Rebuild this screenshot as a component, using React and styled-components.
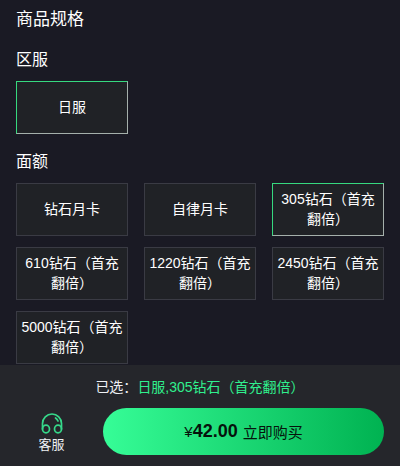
import React from 'react';
import styled, { createGlobalStyle } from 'styled-components';

const GlobalStyle = createGlobalStyle`
  html, body {
    margin: 0;
    padding: 0;
    background: #1a1a24;
    font-family: "Liberation Sans", Arial, "Noto Sans CJK SC", sans-serif;
  }
  * { box-sizing: border-box; }
`;

const Page = styled.div`
  width: 400px;
  height: 466px;
  display: flex;
  flex-direction: column;
  overflow: hidden;
  background: #1a1a24;
`;

const Content = styled.div`
  flex: 1;
  min-height: 0;
  padding: 10px 16px 0;
`;

const Title = styled.h2`
  margin: 0 0 20px;
  height: 20px;
  font-size: 17px;
  line-height: 20px;
  font-weight: 400;
  color: #fff;
`;

const GroupTitle = styled.h3`
  margin: 0 0 11px;
  height: 20px;
  font-size: 16px;
  line-height: 20px;
  font-weight: 400;
  color: #fff;
`;

const Grid = styled.div`
  display: grid;
  grid-template-columns: repeat(3, 112px);
  grid-auto-rows: 53px;
  column-gap: 16px;
  row-gap: 11px;
  margin-bottom: 18px;
`;

const Option = styled.div`
  display: flex;
  align-items: center;
  justify-content: center;
  padding: 0 4px 2px;
  text-align: center;
  font-size: 14px;
  line-height: 20px;
  color: #fff;
  background: #202226;
  border: 1px solid ${({ $active }) => ($active ? '#36d97f' : '#3a3b44')};
  border-right-color: ${({ $active }) => ($active ? '#a5b0ab' : '#3a3b44')};
  border-bottom-color: ${({ $active }) => ($active ? '#a5b0ab' : '#3a3b44')};
`;

const Footer = styled.div`
  height: 101px;
  flex-shrink: 0;
  background: #25262b;
  padding: 12px 16px 0;
`;

const Selected = styled.div`
  height: 20px;
  text-align: center;
  font-size: 14px;
  line-height: 20px;
  color: #eef0f4;
`;

const Accent = styled.span`
  color: #30f08e;
`;

const Actions = styled.div`
  display: flex;
  align-items: center;
  margin-top: 11px;
`;

const Service = styled.div`
  width: 71px;
  margin-right: 16px;
  padding-top: 1px;
  display: flex;
  flex-direction: column;
  align-items: center;
  gap: 2px;
  font-size: 13px;
  line-height: 16px;
  color: #eef0f4;
`;

const BuyButton = styled.button`
  width: 281px;
  height: 47px;
  border: 0;
  padding: 0;
  border-radius: 24px;
  background: linear-gradient(90deg, #36fd97 0%, #00b251 100%);
  color: #06130c;
  font-family: inherit;
  font-size: 15px;
  display: flex;
  align-items: center;
  justify-content: center;
`;

const Price = styled.span`
  font-size: 18px;
  font-weight: 700;
  margin-right: 5px;
`;

const Yen = styled.span`
  font-size: 15px;
  font-weight: 400;
`;

const Headset = () => (
  <svg width="24" height="24" viewBox="0 0 24 24" fill="none" stroke="#36d98a" strokeWidth="1.7" strokeLinecap="round">
    <path d="M2.5 18 V12.5 A9.5 9.5 0 0 1 21.5 12.5 V18" />
    <path d="M15.5 7 A6.5 6.5 0 0 1 18 10" />
    <ellipse cx="6" cy="18" rx="3.5" ry="3.8" />
    <ellipse cx="18" cy="18" rx="3.5" ry="3.8" />
  </svg>
);

const amounts = [
  '钻石月卡',
  '自律月卡',
  '305钻石（首充翻倍）',
  '610钻石（首充翻倍）',
  '1220钻石（首充翻倍）',
  '2450钻石（首充翻倍）',
  '5000钻石（首充翻倍）',
];

export default function App() {
  return (
    <Page>
      <GlobalStyle />
      <Content>
        <Title>商品规格</Title>
        <GroupTitle>区服</GroupTitle>
        <Grid>
          <Option $active>日服</Option>
        </Grid>
        <GroupTitle>面额</GroupTitle>
        <Grid>
          {amounts.map((name, i) => (
            <Option key={name} $active={i === 2}>{name}</Option>
          ))}
        </Grid>
      </Content>
      <Footer>
        <Selected>已选：<Accent>日服,305钻石（首充翻倍）</Accent></Selected>
        <Actions>
          <Service>
            <Headset />
            客服
          </Service>
          <BuyButton>
            <Price><Yen>¥</Yen>42.00</Price>
            立即购买
          </BuyButton>
        </Actions>
      </Footer>
    </Page>
  );
}
